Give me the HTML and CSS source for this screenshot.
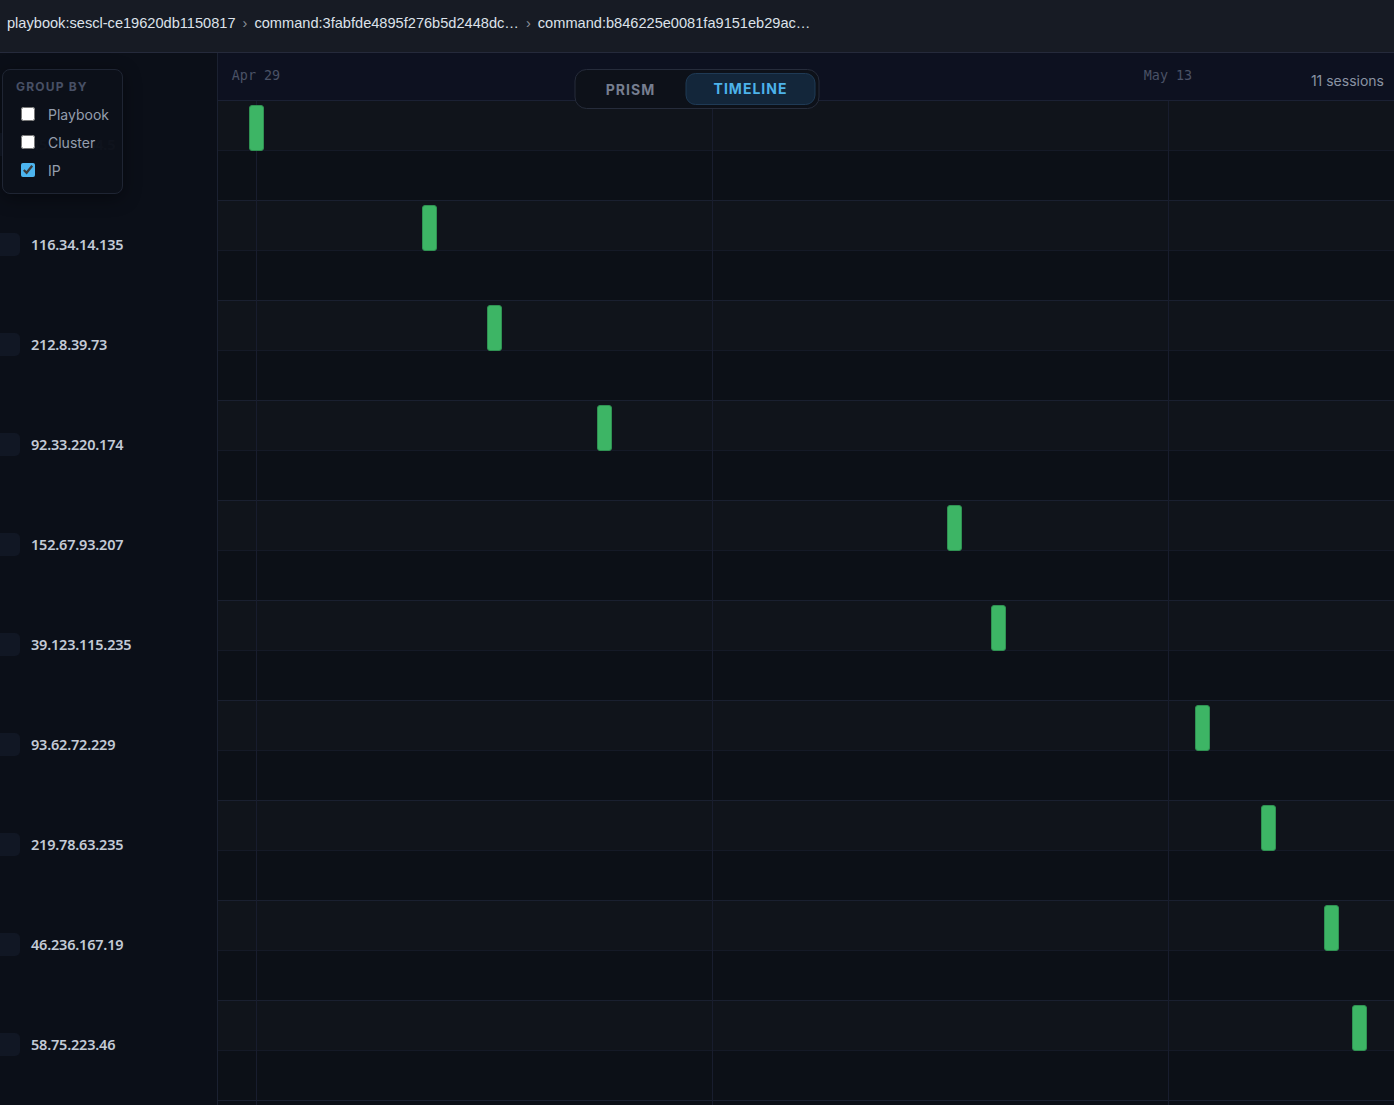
FILE: index.html
```html
<!DOCTYPE html>
<html lang="en">
  <head>
    <meta charset="UTF-8" />
    <title>Sessions - Timeline</title>
    <link rel="stylesheet" href="styles.css">
  </head>
  <body>
    <!-- Breadcrumb bar -->
    <div class="top-bar">
      <span class="crumb">playbook:sescl-ce19620db1150817</span>
      <span class="sep">&rsaquo;</span>
      <span class="crumb">command:3fabfde4895f276b5d2448dc…</span>
      <span class="sep">&rsaquo;</span>
      <span class="crumb">command:b846225e0081fa9151eb29ac…</span>
    </div>

    <div class="main">
      <!-- Left column: group labels -->
      <div class="sidebar">
        <div class="sidebar-head"></div>
        <div class="ip-row"><span class="chip"></span><span class="ip">45.146.164.5</span></div>
        <div class="ip-row"><span class="chip"></span><span class="ip">116.34.14.135</span></div>
        <div class="ip-row"><span class="chip"></span><span class="ip">212.8.39.73</span></div>
        <div class="ip-row"><span class="chip"></span><span class="ip">92.33.220.174</span></div>
        <div class="ip-row"><span class="chip"></span><span class="ip">152.67.93.207</span></div>
        <div class="ip-row"><span class="chip"></span><span class="ip">39.123.115.235</span></div>
        <div class="ip-row"><span class="chip"></span><span class="ip">93.62.72.229</span></div>
        <div class="ip-row"><span class="chip"></span><span class="ip">219.78.63.235</span></div>
        <div class="ip-row"><span class="chip"></span><span class="ip">46.236.167.19</span></div>
        <div class="ip-row"><span class="chip"></span><span class="ip">58.75.223.46</span></div>

        <!-- Group by popover -->
        <div class="group-by">
          <div class="group-title">GROUP BY</div>
          <label class="group-opt"><input type="checkbox"> Playbook</label>
          <label class="group-opt"><input type="checkbox"> Cluster</label>
          <label class="group-opt"><input type="checkbox" checked> IP</label>
        </div>
      </div>

      <!-- Timeline -->
      <div class="timeline">
        <div class="timeline-head">
          <span class="date" style="left: 38px">Apr 29</span>
          <span class="date" style="left: 950px">May 13</span>
          <span class="sessions">11 sessions</span>
        </div>

        <div class="grid-line" style="left: 38px"></div>
        <div class="grid-line" style="left: 494px"></div>
        <div class="grid-line" style="left: 950px"></div>

        <div class="t-row"><div class="half"></div><div class="half"></div><div class="bar" style="left: 31px"></div></div>
        <div class="t-row"><div class="half"></div><div class="half"></div><div class="bar" style="left: 204px"></div></div>
        <div class="t-row"><div class="half"></div><div class="half"></div><div class="bar" style="left: 269px"></div></div>
        <div class="t-row"><div class="half"></div><div class="half"></div><div class="bar" style="left: 379px"></div></div>
        <div class="t-row"><div class="half"></div><div class="half"></div><div class="bar" style="left: 729px"></div></div>
        <div class="t-row"><div class="half"></div><div class="half"></div><div class="bar" style="left: 773px"></div></div>
        <div class="t-row"><div class="half"></div><div class="half"></div><div class="bar" style="left: 977px"></div></div>
        <div class="t-row"><div class="half"></div><div class="half"></div><div class="bar" style="left: 1043px"></div></div>
        <div class="t-row"><div class="half"></div><div class="half"></div><div class="bar" style="left: 1106px"></div></div>
        <div class="t-row"><div class="half"></div><div class="half"></div><div class="bar" style="left: 1134px"></div></div>
      </div>

      <!-- View toggle -->
      <div class="view-toggle">
        <div class="view-btn">PRISM</div>
        <div class="view-btn active">TIMELINE</div>
      </div>
    </div>
  </body>
</html>
```

FILE: styles.css
```css
/* --- Reset --- */
* {
  margin: 0;
  padding: 0;
  box-sizing: border-box;
}

body {
  font-family: "Liberation Sans", Arial, sans-serif;
  background-color: #0b0f17;
  height: 100vh;
  overflow: hidden;
  display: flex;
  flex-direction: column;
}

/* --- Breadcrumb bar --- */
.top-bar {
  height: 53px;
  flex-shrink: 0;
  background-color: #171b24;
  border-bottom: 1px solid #252a3b;
  display: flex;
  align-items: flex-start;
  padding: 15px 7px 0;
  font-size: 14.6px;
  color: #dde2ea;
  white-space: nowrap;
}
.top-bar .sep {
  color: #8b909b;
  margin: 0 7px;
}

/* --- Main area --- */
.main {
  flex: 1;
  display: flex;
  min-height: 0;
  position: relative;
}

/* --- Left labels --- */
.sidebar {
  width: 218px;
  flex-shrink: 0;
  background-color: #0b0f18;
  border-right: 1px solid #1b2131;
  position: relative;
  overflow: hidden;
}
.sidebar-head {
  height: 47px;
}
.ip-row {
  height: 100px;
  display: flex;
  align-items: flex-start;
  gap: 11px;
  padding-top: 33px;
}
.chip {
  width: 20px;
  height: 23px;
  background-color: #111724;
  border-radius: 0 5px 5px 0;
}
.ip {
  font-family: "Noto Sans", sans-serif;
  font-weight: 600;
  font-size: 14.5px;
  line-height: 23px;
  color: #c3cad6;
  letter-spacing: -0.2px;
}

/* --- Group by popover --- */
.group-by {
  position: absolute;
  top: 16px;
  left: 2px;
  width: 121px;
  height: 125px;
  background-color: rgba(12, 16, 25, 0.985);
  border: 1px solid #1f2533;
  border-radius: 8px;
  padding: 9px 0 0 13px;
  box-shadow: 0 4px 18px rgba(0, 0, 0, 0.4);
}
.group-title {
  font-family: "Inter", sans-serif;
  font-size: 12px;
  font-weight: 700;
  letter-spacing: 1.2px;
  color: #485066;
  margin-bottom: 6px;
}
.group-opt {
  display: flex;
  align-items: center;
  height: 28px;
  padding-left: 5px;
  font-family: "Inter", sans-serif;
  font-size: 14px;
  color: #959eae;
}
.group-opt input {
  width: 14px;
  height: 14px;
  margin-right: 13px;
  accent-color: #4cb4ee;
}

/* --- Timeline --- */
.timeline {
  flex: 1;
  position: relative;
  overflow: hidden;
}
.timeline-head {
  height: 48px;
  background-color: #0d1120;
  border-bottom: 1px solid #1b2134;
  position: relative;
}
.date {
  position: absolute;
  top: 15px;
  transform: translateX(-50%);
  font-family: "DejaVu Sans Mono", monospace;
  font-size: 13.4px;
  color: #4a5266;
}
.sessions {
  position: absolute;
  right: 10px;
  top: 19px;
  font-family: "Inter", sans-serif;
  font-size: 14px;
  color: #8a93a3;
}
.grid-line {
  position: absolute;
  top: 48px;
  bottom: 0;
  width: 1px;
  background-color: #181d2e;
  z-index: 1;
}
.t-row {
  height: 100px;
  position: relative;
  border-bottom: 1px solid #1a2030;
}
.t-row .half {
  height: 49.5px;
}
.t-row .half:first-child {
  background-color: #10141b;
  border-bottom: 1px solid #151a27;
}
.t-row .half:nth-child(2) {
  background-color: #0c1017;
}
.bar {
  position: absolute;
  top: 4px;
  width: 15px;
  height: 46px;
  background-color: #3db565;
  border: 1px solid #2f9152;
  border-radius: 3px;
  z-index: 2;
}

/* --- View toggle --- */
.view-toggle {
  position: absolute;
  top: 16px;
  left: 50%;
  transform: translateX(-50%);
  width: 245px;
  height: 40px;
  display: flex;
  align-items: center;
  gap: 4px;
  padding: 0 3px 0 4px;
  background-color: #0d1119;
  border: 1px solid #262c3b;
  border-radius: 12px;
  z-index: 5;
}
.view-btn {
  flex: 1;
  text-align: center;
  font-family: "Inter", sans-serif;
  font-weight: 700;
  font-size: 14px;
  letter-spacing: 1px;
  color: #767e90;
}
.view-btn.active {
  flex: 0 0 130px;
  height: 32px;
  line-height: 30px;
  background-color: #13263a;
  border: 1px solid #1f3a55;
  border-radius: 10px;
  color: #4db3ea;
}
```
